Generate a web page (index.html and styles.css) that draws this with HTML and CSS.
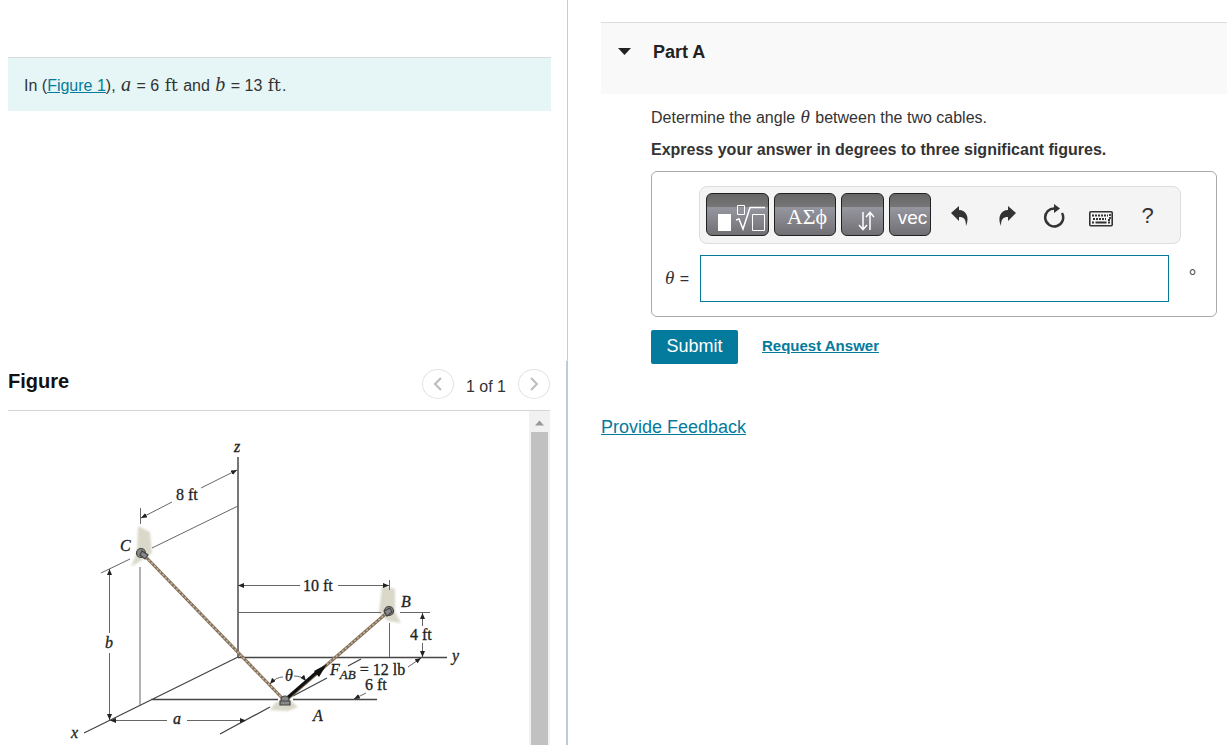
FILE: index.html
```html
<!DOCTYPE html>
<html lang="en">
<head>
<meta charset="utf-8">
<title>Part A</title>
<link rel="stylesheet" href="styles.css">
</head>
<body>
<div class="page">
  <div class="left">
    <section class="problem">
      <p class="intro">In (<a href="#figure">Figure 1</a>), <i class="math">a</i> = 6 <span class="math-unit">ft</span> and <i class="math">b</i> = 13 <span class="math-unit">ft</span>.</p>
    </section>
    <section class="figure" id="figure">
      <header class="figure-head">
        <h2>Figure</h2>
        <nav class="pager">
          <button class="round" aria-label="Previous figure"><svg width="10" height="14" viewBox="0 0 10 14"><path d="M8 1 2 7l6 6"/></svg></button>
          <span>1 of 1</span>
          <button class="round" aria-label="Next figure"><svg width="10" height="14" viewBox="0 0 10 14"><path d="m2 1 6 6-6 6"/></svg></button>
        </nav>
      </header>
      <div class="viewer">
        <div class="drawing">
          <svg width="521" height="334" viewBox="8 411 521 334" role="img" aria-label="Two cables AC and AB meeting at point A">
            <defs>
              <marker id="tip" markerUnits="userSpaceOnUse" markerWidth="6" markerHeight="5" refX="6" refY="2.5" orient="auto-start-reverse"><path d="M0 0 6 2.5 0 5z" fill="#222"/></marker>
              <filter id="soft" x="-30%" y="-30%" width="160%" height="160%"><feGaussianBlur stdDeviation="1.2"/></filter>
            </defs>
            <g class="wall" filter="url(#soft)">
              <path d="M138 526 150 532 152 553 142 560 131 567 137 552z"/>
              <path d="M382 586 395 589 395 612 401 623 388 621 379 613z"/>
              <path d="M276 702 291 701 298 707 288 711 270 710z"/>
            </g>
            <g class="axis">
              <path class="grey" d="M238 457V657"/>
              <path d="M238 657.500H447M238 657 84 733M151 699.500H278M293 699.500H377M270 707 220 734"/>
              <path d="M293 696 327 678M348 666 361 659"/>
            </g>
            <g class="line">
              <path d="M140.500 508V524M140 567V705M152 548 238 506M130 559 101 573M238 612.500H381M400 612.500H430M389.500 580V590M389.500 623V657"/>
              <path marker-end="url(#tip)" d="M201 488 237 470"/>
              <path marker-end="url(#tip)" d="M172 502 141 518"/>
              <path marker-end="url(#tip)" d="M109.500 633V569"/>
              <path marker-end="url(#tip)" d="M109.500 653V720"/>
              <path marker-end="url(#tip)" d="M167 720.500H110"/>
              <path marker-end="url(#tip)" d="M187 720.500H246"/>
              <path marker-end="url(#tip)" d="M300 585.500H238"/>
              <path marker-end="url(#tip)" d="M338 585.500H389"/>
              <path marker-end="url(#tip)" d="M422.500 626V613"/>
              <path marker-end="url(#tip)" d="M422.500 643V657"/>
              <path marker-end="url(#tip)" d="M408 667 421 658"/>
              <path marker-end="url(#tip)" d="M366 693 354 699"/>
              <path marker-end="url(#tip)" d="M283 677Q276 677 270 684"/>
              <path marker-end="url(#tip)" d="M294 676Q302 676 306 681"/>
            </g>
            <path class="rope" d="M143 554 285 701M389 611 285 701"/>
            <path class="twist" d="M143 554 285 701M389 611 324 667"/>
            <path class="force" d="M286 699 317 672"/>
            <path d="M327 664 319 677 314 671z" fill="#111"/>
            <g class="pin">
              <circle cx="141" cy="553" r="4.500"/><path d="m142 551 6 4-3 4-5-4z"/>
              <circle cx="389" cy="611" r="4.500"/><path d="m384 611 6-3 2 4-5 4z"/>
              <circle cx="285" cy="700" r="4"/><path d="M280 701h10v4h-10z"/>
            </g>
            <g class="labels">
              <text class="it" x="234" y="452">z</text>
              <text x="176" y="500">8 ft</text>
              <text class="it" x="120" y="551">C</text>
              <text x="303" y="591">10 ft</text>
              <text class="it" x="401" y="607">B</text>
              <text x="410" y="640">4 ft</text>
              <text class="it" x="452" y="661">y</text>
              <text class="it" x="105" y="648">b</text>
              <text class="it" x="285" y="681">θ</text>
              <text x="330" y="675"><tspan class="it">F</tspan><tspan class="it sub" dy="4">AB</tspan><tspan dy="-4"> = 12 lb</tspan></text>
              <text x="365" y="690">6 ft</text>
              <text class="it" x="173" y="724">a</text>
              <text class="it" x="313" y="721">A</text>
              <text class="it" x="71" y="738">x</text>
            </g>
          </svg>
        </div>
        <div class="scroll" aria-hidden="true">
          <svg width="21" height="21" viewBox="0 0 21 21"><path d="M6 14.500 10.500 9.500 15 14.500z" fill="#999"/></svg>
          <div class="thumb"></div>
        </div>
      </div>
    </section>
  </div>

  <main class="right">
    <header class="part-head">
      <svg width="14" height="8" viewBox="0 0 14 8" aria-hidden="true"><path d="M1 0H14L7.500 7z" fill="#222"/></svg>
      <h1>Part A</h1>
    </header>
    <form class="part">
      <p>Determine the angle <i class="math theta">θ</i> between the two cables.</p>
      <p class="strong">Express your answer in degrees to three significant figures.</p>
      <div class="answer">
        <div class="toolbar">
          <button type="button" class="key templates" aria-label="Templates">
            <svg width="61" height="41" viewBox="1 1 61 41" fill="none" stroke="#fff"><path d="M12 21H25V38H12z" fill="#fff" stroke="none"/><path d="M31.500 12.500h7v9h-7zM46.500 21.500h12v16h-12z"/><path d="M30 27l3-1 4 10 7-21.500H59" stroke-width="1.500"/></svg>
          </button>
          <button type="button" class="key greek">ΑΣϕ</button>
          <button type="button" class="key" aria-label="Subscript and superscript">
            <svg width="41" height="41" viewBox="1 1 41 41" fill="none" stroke="#fff" stroke-width="1.500"><path d="M22 19V36M18 32l4 4.500 4-4.500M29 37V20M25 24l4-4.500 4 4.500"/></svg>
          </button>
          <button type="button" class="key vec">vec</button>
          <div class="tools">
            <button type="button" aria-label="Undo"><svg width="20" height="22" viewBox="0 0 20 22"><path d="M1 8 9 1V5C16 5 20 12 16 21 16 14 14 12 9 12v4z"/></svg></button>
            <button type="button" aria-label="Redo"><svg width="20" height="22" viewBox="0 0 20 22"><path d="M19 8 11 1V5C4 5 0 12 4 21 4 14 6 12 11 12v4z"/></svg></button>
            <button type="button" aria-label="Reset"><svg width="22" height="24" viewBox="0 0 22 24"><path d="M12 4.500A9 9 0 1 0 19 9" fill="none" stroke="#333" stroke-width="2.500"/><path d="M11 0 17 4.500 11 9z"/></svg></button>
            <button type="button" aria-label="Keyboard"><svg class="low" width="24" height="16" viewBox="0 0 24 16"><rect x=".8" y=".8" width="22.400" height="14" rx="1" fill="none" stroke="#333" stroke-width="1.600"/><path d="M3 4.500H19M4 8H17M21 3V9H18" fill="none" stroke="#333" stroke-width="1.800" stroke-dasharray="2 1"/><path d="M3 10.500h2v2H3zM6.500 10.500h11v2h-11zM19 10.500h2v2h-2z"/></svg></button>
            <button type="button" class="help" aria-label="Help">?</button>
          </div>
        </div>
        <div class="entry">
          <label for="theta"><i class="math theta">θ</i> =</label>
          <input id="theta" type="text">
          <span class="unit">°</span>
        </div>
      </div>
      <div class="actions">
        <button type="submit" class="submit">Submit</button>
        <a href="#request">Request Answer</a>
      </div>
    </form>
    <a class="feedback" href="#feedback">Provide Feedback</a>
  </main>
</div>
</body>
</html>
```
FILE: styles.css
```css
* { box-sizing: border-box; }
body { margin: 0; background: #fff; color: #333; font: 16px/22px "Liberation Sans", Arial, sans-serif; }
h1, h2, p { margin: 0; }
a { color: #047a9c; }
button { font-family: inherit; margin: 0; padding: 0; cursor: pointer; }
svg { display: block; }
.math, .math-unit { margin: 0 1px; line-height: 20px; }
.math { font-family: "Liberation Serif", serif; font-size: 20px; }
.math-unit { font-family: "DejaVu Serif", serif; font-size: 17px; }
.theta { font-size: 19px; }

.page { display: grid; grid-template-columns: 568fr 659fr; height: 100vh; }
.left { display: grid; grid-template-rows: minmax(0, 361fr) minmax(0, 384fr); min-width: 0; min-height: 0; }

.problem { padding: 57px 16px 0 8px; border-right: 1px solid #c8cdd2; }
.intro { padding: 16px 16px 15px; border-top: 1px solid #d5dddd; background: #e6f6f6; line-height: 21px; }

.figure { display: flex; flex-direction: column; min-height: 0; padding-left: 8px; padding-right: 16px; border-right: 2px solid #b9cbdc; }
.figure-head { display: flex; justify-content: space-between; height: 50px; border-bottom: 1px solid #d5d5d5; }
h2 { padding-top: 8px; color: #111; font-size: 20px; line-height: 24px; }
.pager { display: flex; align-items: center; gap: 12px; height: 46px; }
.pager span { padding-top: 6px; }
.round { display: grid; place-items: center; width: 32px; height: 30px; border: 1px solid #e2e2e2; border-radius: 50%; background: #fff; }
.round path { fill: none; stroke: #bbb; stroke-width: 2; }
.viewer { flex: 1; display: flex; min-height: 0; }
.drawing { flex: 1; min-width: 0; overflow: hidden; }
.scroll { display: flex; flex-direction: column; width: 21px; background: #f1f1f1; }
.thumb { flex: 1; margin: 0 2px; background: #c1c1c1; }

.axis { fill: none; stroke: #444; stroke-width: 1.3; }
.axis .grey { stroke: #777; stroke-width: 2; }
.line { fill: none; stroke: #666; stroke-width: 1; }
.wall { fill: #d9d8c9; }
.rope { fill: none; stroke: #85705a; stroke-width: 3; }
.twist { fill: none; stroke: #c5b7a0; stroke-width: 1.5; stroke-dasharray: 2 2; }
.force { stroke: #111; stroke-width: 3; }
.pin { fill: #888; stroke: #444; stroke-width: 1.2; }
.labels { fill: #222; stroke: #222; stroke-width: 0.3; font-family: "Liberation Serif", serif; font-size: 16px; }
.labels .it { font-style: italic; }
.labels .sub { font-size: 13px; }

.right { min-width: 0; padding: 22px 0 0 33px; }
.part-head { display: flex; align-items: center; gap: 22px; height: 72px; padding: 0 16px 14px; border-top: 1px solid #ddd; background: #f9f9f9; }
h1 { color: #222; font-size: 18px; line-height: 24px; }
.part { padding: 13px 10px 0 50px; }
.part p { line-height: 22px; }
.part .strong { padding: 10px 0; font-weight: bold; }
.answer { padding: 14px 0; border: 1px solid #aaa; border-radius: 6px; }
.toolbar { display: flex; align-items: center; gap: 5px; height: 58px; margin: 0 35px 0 47px; padding: 0 9px 2px 6px; border: 1px solid #ddd; border-radius: 8px; background: #f4f4f4; }
.key { flex: none; width: 43px; height: 43px; overflow: hidden; border: 1px solid #222; border-radius: 6px; background: linear-gradient(#666 0, #777 32%, #9696a0 33%, #707073 100%); color: #fff; }
.templates { width: 63px; }
.greek { width: 62px; padding: 6px 0 0 4px; font-family: "Liberation Serif", serif; font-size: 22px; }
.vec { width: 42px; padding: 8px 0 0 5px; font-size: 19px; }
.tools { flex: 1; display: flex; justify-content: space-around; min-width: 0; padding-top: 4px; }
.tools button { display: grid; place-items: center; width: 24px; height: 32px; border: 0; background: none; color: #333; fill: #333; }
.tools .low { margin-top: 5px; }
.tools .help { font-size: 22px; }
.entry { display: grid; grid-template-columns: 48px 1fr 47px; margin-top: 11px; }
.entry label { align-self: center; padding-left: 12px; }
.entry input { width: 100%; min-width: 0; height: 47px; padding: 8px; border: 1px solid #047a9c; background: #fff; font: inherit; }
.unit { align-self: center; padding-bottom: 4px; color: #555; text-align: center; font-size: 20px; }
.actions { display: flex; align-items: center; gap: 24px; padding-top: 13px; }
.submit { width: 87px; height: 34px; padding-bottom: 2px; border: 0; border-radius: 2px; background: #047a9c; color: #fff; font-size: 18px; }
.actions a { padding-bottom: 2px; font-size: 15px; font-weight: bold; }
.feedback { display: inline-block; margin-top: 52px; font-size: 18px; }
```
